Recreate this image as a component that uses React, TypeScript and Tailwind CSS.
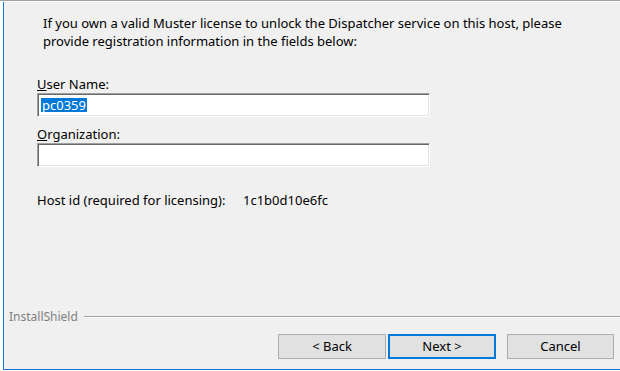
import React from "react";

const font = { fontFamily: '"Noto Sans", "Liberation Sans", Arial, sans-serif' };

function Field({ accel, rest, value }: { accel: string; rest: string; value?: string }) {
  return (
    <div className="ml-[33px]">
      <div className="h-4 leading-4">
        <span className="underline underline-offset-1">{accel}</span>
        {rest}
      </div>
      <div className="mt-px h-6 w-[393px] bg-white border border-t-[#a0a0a0] border-l-[#a0a0a0] border-r-white border-b-white shadow-[inset_1px_1px_0_#696969,inset_-1px_-1px_0_#e3e3e3] flex items-center pl-[3px]">
        {value && <span className="bg-[#0078d7] text-white leading-[14px] h-[14px] px-px">{value}</span>}
      </div>
    </div>
  );
}

export default function App() {
  return (
    <div className="w-[620px] h-[371px] bg-white flex flex-col overflow-hidden text-[13px] text-black" style={font}>
      <div className="h-px w-full bg-[#a0a0a0]" />
      <div className="h-px w-full bg-white" />
      <div className="ml-[3px] flex-1 flex flex-col bg-[#f0f0f0] border-l border-b border-[#1a78cf]">
        <p className="mt-[12px] ml-[39px] leading-[18px] w-[560px]">
          If you own a valid Muster license to unlock the Dispatcher service on this host, please
          <br />
          provide registration information in the fields below:
        </p>

        <div className="mt-[26px]">
          <Field accel="U" rest="ser Name:" value="pc0359" />
        </div>
        <div className="mt-[9px]">
          <Field accel="O" rest="rganization:" />
        </div>

        <div className="mt-[25px] ml-[33px] h-4 leading-4 flex">
          <span className="w-[206px]">Host id (required for licensing):</span>
          <span>1c1b0d10e6fc</span>
        </div>

        <div className="mt-auto">
          <div className="flex items-center h-4 pl-[5px]">
            <span className="text-[#7f7f7f] text-[12px] leading-4">InstallShield</span>
            <div className="ml-[6px] flex-1 flex flex-col">
              <div className="h-px bg-[#a0a0a0]" />
              <div className="h-px bg-white" />
            </div>
          </div>
          <div className="mt-[9px] mb-[10px] flex justify-end pr-[6px]">
            <button className="w-[108px] h-[25px] bg-[#e1e1e1] border border-[#adadad]">&lt; Back</button>
            <button className="ml-[2px] w-[108px] h-[25px] bg-[#e1e1e1] border-2 border-[#0078d7]">Next &gt;</button>
            <button className="ml-[11px] w-[107px] h-[25px] bg-[#e1e1e1] border border-[#adadad]">Cancel</button>
          </div>
        </div>
      </div>
      <div className="h-px" />
    </div>
  );
}
